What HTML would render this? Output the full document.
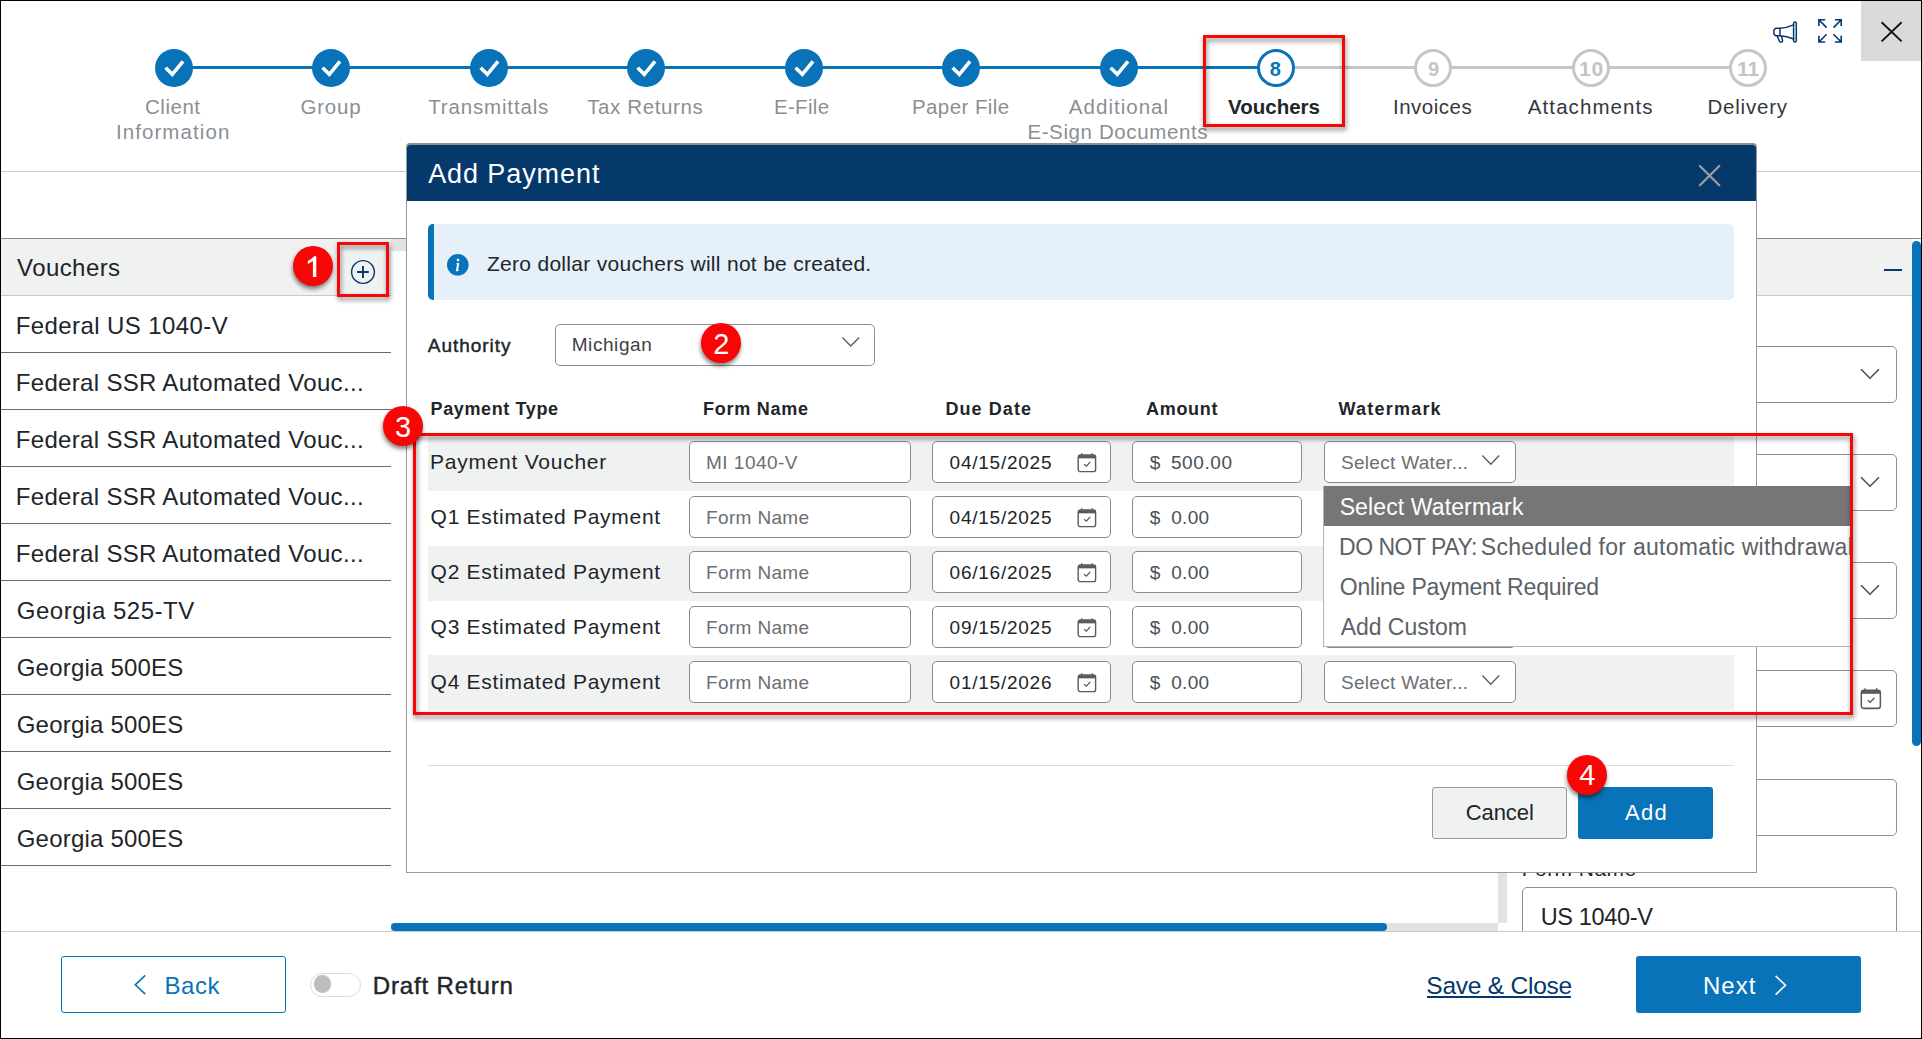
<!DOCTYPE html>
<html><head><meta charset="utf-8"><title>Add Payment</title>
<style>
html,body{margin:0;padding:0;}
body{width:1922px;height:1039px;overflow:hidden;background:#fff;position:relative;font-family:"Liberation Sans", sans-serif;}
#root{position:absolute;left:0;top:0;width:1922px;height:1039px;overflow:hidden;}
#root div,#root svg,#root span{position:absolute;box-sizing:border-box;}
.t{white-space:pre;line-height:0;}
.t i{display:inline-block;position:static !important;width:0;height:40px;}
#frame{left:0;top:0;width:1922px;height:1039px;border:1px solid #000;pointer-events:none;}
</style></head><body><div id="root">
<div style="left:1px;top:171px;width:1920px;height:1px;background:#c9c9c9;"></div>
<div style="left:1861px;top:1px;width:60px;height:60px;background:#d9d9d9;"></div>
<svg style="left:1879px;top:19px" width="26" height="26" viewBox="0 0 26 26"><path d="M2.6 3.2 L22.6 22.4 M22.6 3.2 L2.6 22.4" stroke="#111" stroke-width="1.9" fill="none"/></svg>
<svg style="left:1770px;top:18px" width="30" height="28" viewBox="1770 18 30 28" fill="none" stroke="#05386b" stroke-width="1.5" stroke-linejoin="round" stroke-linecap="round"><rect x="1793.6" y="22" width="2.7" height="20.1" rx="1.35"/><path d="M1793.6 24.9 C1789 27 1784.3 28.1 1780 28.2 L1776.7 28.2 C1774.7 28.2 1773.8 29.7 1773.8 31.95 C1773.8 34.2 1774.7 35.7 1776.7 35.7 L1780 35.7 C1784.3 35.8 1789 36.9 1793.6 39"/><path d="M1780 28.2 L1780 35.7"/><path d="M1777.2 36 L1779.5 41.4 C1780 42.5 1782.8 42.3 1782.5 40.8 L1781.7 36.3"/></svg>
<svg style="left:1815px;top:16px" width="30" height="30" viewBox="1815 16 30 30" fill="none" stroke="#05386b" stroke-width="1.6"><path d="M1825.2 19.8 H1818.9 V26.1 M1818.9 19.8 L1826.6 27.6"/><path d="M1834.9 19.8 H1841.2 V26.1 M1841.2 19.8 L1833.5 27.6"/><path d="M1825.2 42 H1818.9 V35.7 M1818.9 42 L1826.6 34.2"/><path d="M1834.9 42 H1841.2 V35.7 M1841.2 42 L1833.5 34.2"/></svg>
<div style="left:173.6px;top:66px;width:1102.0px;height:3px;background:#0973ba;"></div>
<div style="left:1275.6px;top:66px;width:472.60000000000014px;height:3px;background:#c6c6c6;"></div>
<svg style="left:154.6px;top:49px" width="38" height="38" viewBox="-19 -19 38 38"><circle r="19" fill="#0973ba"/><path d="M-8.4 -0.2 L-1.7 6.3 L9 -6.6" stroke="#fff" stroke-width="3.6" fill="none"/></svg>
<svg style="left:311.9px;top:49px" width="38" height="38" viewBox="-19 -19 38 38"><circle r="19" fill="#0973ba"/><path d="M-8.4 -0.2 L-1.7 6.3 L9 -6.6" stroke="#fff" stroke-width="3.6" fill="none"/></svg>
<svg style="left:469.7px;top:49px" width="38" height="38" viewBox="-19 -19 38 38"><circle r="19" fill="#0973ba"/><path d="M-8.4 -0.2 L-1.7 6.3 L9 -6.6" stroke="#fff" stroke-width="3.6" fill="none"/></svg>
<svg style="left:626.7px;top:49px" width="38" height="38" viewBox="-19 -19 38 38"><circle r="19" fill="#0973ba"/><path d="M-8.4 -0.2 L-1.7 6.3 L9 -6.6" stroke="#fff" stroke-width="3.6" fill="none"/></svg>
<svg style="left:784.5px;top:49px" width="38" height="38" viewBox="-19 -19 38 38"><circle r="19" fill="#0973ba"/><path d="M-8.4 -0.2 L-1.7 6.3 L9 -6.6" stroke="#fff" stroke-width="3.6" fill="none"/></svg>
<svg style="left:941.7px;top:49px" width="38" height="38" viewBox="-19 -19 38 38"><circle r="19" fill="#0973ba"/><path d="M-8.4 -0.2 L-1.7 6.3 L9 -6.6" stroke="#fff" stroke-width="3.6" fill="none"/></svg>
<svg style="left:1099.6px;top:49px" width="38" height="38" viewBox="-19 -19 38 38"><circle r="19" fill="#0973ba"/><path d="M-8.4 -0.2 L-1.7 6.3 L9 -6.6" stroke="#fff" stroke-width="3.6" fill="none"/></svg>
<svg style="left:1256.6px;top:49px" width="38" height="38" viewBox="-19 -19 38 38"><circle r="17.5" fill="#fff" stroke="#0973ba" stroke-width="3"/></svg>
<svg style="left:1414.4px;top:49px" width="38" height="38" viewBox="-19 -19 38 38"><circle r="17.5" fill="#fff" stroke="#c6c6c6" stroke-width="3"/></svg>
<svg style="left:1571.6px;top:49px" width="38" height="38" viewBox="-19 -19 38 38"><circle r="17.5" fill="#fff" stroke="#c6c6c6" stroke-width="3"/></svg>
<svg style="left:1729.2px;top:49px" width="38" height="38" viewBox="-19 -19 38 38"><circle r="17.5" fill="#fff" stroke="#c6c6c6" stroke-width="3"/></svg>
<div class="t" style="left:1269.83px;top:35.50px;font-size:20px;color:#0973ba;font-weight:700;"><i></i>8</div>
<div class="t" style="left:1427.90px;top:35.50px;font-size:20px;color:#c4c4c4;font-weight:700;"><i></i>9</div>
<div class="t" style="left:1579.04px;top:35.50px;font-size:21px;color:#c4c4c4;font-weight:700;letter-spacing:0.735px;"><i></i>10</div>
<div class="t" style="left:1737.09px;top:35.50px;font-size:21px;color:#c4c4c4;font-weight:700;letter-spacing:-0.030px;"><i></i>11</div>
<div class="t" style="left:145.00px;top:73.70px;font-size:20.5px;color:#8b8f93;letter-spacing:0.518px;"><i></i>Client</div>
<div class="t" style="left:115.97px;top:98.70px;font-size:20.5px;color:#8b8f93;letter-spacing:1.076px;"><i></i>Information</div>
<div class="t" style="left:300.45px;top:73.70px;font-size:20.5px;color:#8b8f93;letter-spacing:0.815px;"><i></i>Group</div>
<div class="t" style="left:428.14px;top:73.70px;font-size:20.5px;color:#8b8f93;letter-spacing:0.851px;"><i></i>Transmittals</div>
<div class="t" style="left:587.14px;top:73.70px;font-size:20.5px;color:#8b8f93;letter-spacing:0.636px;"><i></i>Tax Returns</div>
<div class="t" style="left:773.89px;top:73.70px;font-size:20.5px;color:#8b8f93;letter-spacing:0.331px;"><i></i>E-File</div>
<div class="t" style="left:911.89px;top:73.70px;font-size:20.5px;color:#8b8f93;letter-spacing:0.439px;"><i></i>Paper File</div>
<div class="t" style="left:1068.87px;top:73.70px;font-size:20.5px;color:#8b8f93;letter-spacing:1.022px;"><i></i>Additional</div>
<div class="t" style="left:1027.39px;top:98.70px;font-size:20.5px;color:#8b8f93;letter-spacing:0.612px;"><i></i>E-Sign Documents</div>
<div class="t" style="left:1228.09px;top:73.70px;font-size:20.5px;color:#212529;font-weight:700;"><i></i>Vouchers</div>
<div class="t" style="left:1392.96px;top:73.70px;font-size:20.5px;color:#34383c;letter-spacing:0.514px;"><i></i>Invoices</div>
<div class="t" style="left:1527.87px;top:73.70px;font-size:20.5px;color:#34383c;letter-spacing:1.070px;"><i></i>Attachments</div>
<div class="t" style="left:1707.39px;top:73.70px;font-size:20.5px;color:#34383c;letter-spacing:0.801px;"><i></i>Delivery</div>
<div style="left:1px;top:238px;width:406px;height:1px;background:#8c8c8c;"></div>
<div style="left:1px;top:239px;width:390px;height:56px;background:#f0f1f1;"></div>
<div style="left:1px;top:295px;width:390px;height:1px;background:#c8c8c8;"></div>
<div style="left:391px;top:239px;width:15px;height:12px;background:#e2e2e2;"></div>
<div class="t" style="left:17.10px;top:235.60px;font-size:24px;color:#212529;letter-spacing:0.413px;"><i></i>Vouchers</div>
<svg style="left:349px;top:258px" width="28" height="28" viewBox="349 258 28 28" fill="none" stroke="#05386b"><circle cx="363" cy="272" r="11.4" stroke-width="1.4"/><path d="M357.1 272 H368.8 M363 266.1 V277.9" stroke-width="1.9"/></svg>
<div class="t" style="left:15.80px;top:294.00px;font-size:24px;color:#212529;letter-spacing:0.406px;"><i></i>Federal US 1040-V</div>
<div style="left:1px;top:352px;width:390px;height:1px;background:#6b6b6b;"></div>
<div class="t" style="left:15.80px;top:351.00px;font-size:24px;color:#212529;letter-spacing:0.318px;"><i></i>Federal SSR Automated Vouc...</div>
<div style="left:1px;top:409px;width:390px;height:1px;background:#6b6b6b;"></div>
<div class="t" style="left:15.80px;top:408.00px;font-size:24px;color:#212529;letter-spacing:0.318px;"><i></i>Federal SSR Automated Vouc...</div>
<div style="left:1px;top:466px;width:390px;height:1px;background:#6b6b6b;"></div>
<div class="t" style="left:15.80px;top:465.00px;font-size:24px;color:#212529;letter-spacing:0.318px;"><i></i>Federal SSR Automated Vouc...</div>
<div style="left:1px;top:523px;width:390px;height:1px;background:#6b6b6b;"></div>
<div class="t" style="left:15.80px;top:522.00px;font-size:24px;color:#212529;letter-spacing:0.318px;"><i></i>Federal SSR Automated Vouc...</div>
<div style="left:1px;top:580px;width:390px;height:1px;background:#6b6b6b;"></div>
<div class="t" style="left:16.71px;top:579.00px;font-size:24px;color:#212529;letter-spacing:0.524px;"><i></i>Georgia 525-TV</div>
<div style="left:1px;top:637px;width:390px;height:1px;background:#6b6b6b;"></div>
<div class="t" style="left:16.71px;top:636.00px;font-size:24px;color:#212529;letter-spacing:0.208px;"><i></i>Georgia 500ES</div>
<div style="left:1px;top:694px;width:390px;height:1px;background:#6b6b6b;"></div>
<div class="t" style="left:16.71px;top:693.00px;font-size:24px;color:#212529;letter-spacing:0.208px;"><i></i>Georgia 500ES</div>
<div style="left:1px;top:751px;width:390px;height:1px;background:#6b6b6b;"></div>
<div class="t" style="left:16.71px;top:750.00px;font-size:24px;color:#212529;letter-spacing:0.208px;"><i></i>Georgia 500ES</div>
<div style="left:1px;top:808px;width:390px;height:1px;background:#6b6b6b;"></div>
<div class="t" style="left:16.71px;top:807.00px;font-size:24px;color:#212529;letter-spacing:0.208px;"><i></i>Georgia 500ES</div>
<div style="left:1px;top:865px;width:390px;height:1px;background:#6b6b6b;"></div>
<div style="left:1757px;top:238px;width:164px;height:1px;background:#8c8c8c;"></div>
<div style="left:1757px;top:239px;width:155px;height:56px;background:#f0f1f1;"></div>
<div style="left:1757px;top:295px;width:155px;height:1px;background:#c8c8c8;"></div>
<div style="left:1884px;top:269px;width:18px;height:2px;background:#05386b;"></div>
<div style="left:1912px;top:241px;width:9px;height:505px;background:#0973ba;border-radius:5px;"></div>
<div style="left:1700px;top:346px;width:197px;height:57px;border:1px solid #8d9196;border-radius:5px;background:#fff;"></div>
<svg style="left:1857.5px;top:365.2px" width="24" height="18" viewBox="0 0 24 18"><path d="M3 4.2 L12 13.2 L21 4.2" fill="none" stroke="#4a4f54" stroke-width="1.6"/></svg>
<div style="left:1700px;top:454px;width:197px;height:57px;border:1px solid #8d9196;border-radius:5px;background:#fff;"></div>
<svg style="left:1857.5px;top:473.2px" width="24" height="18" viewBox="0 0 24 18"><path d="M3 4.2 L12 13.2 L21 4.2" fill="none" stroke="#4a4f54" stroke-width="1.6"/></svg>
<div style="left:1700px;top:562px;width:197px;height:57px;border:1px solid #8d9196;border-radius:5px;background:#fff;"></div>
<svg style="left:1857.5px;top:581.2px" width="24" height="18" viewBox="0 0 24 18"><path d="M3 4.2 L12 13.2 L21 4.2" fill="none" stroke="#4a4f54" stroke-width="1.6"/></svg>
<div style="left:1700px;top:670px;width:197px;height:57px;border:1px solid #8d9196;border-radius:5px;background:#fff;"></div>
<svg style="left:1860.1px;top:688.38px" width="21.900000000000002" height="22.400000000000002" viewBox="-0.5 -1.2 20 20.2" fill="none" stroke="#555b61"><rect x="0.7" y="0.7" width="17.4" height="16.6" rx="2.2" stroke-width="1.4"/><path d="M0.7 2.4 H18.1" stroke-width="3.2"/><path d="M4.2 -1 V1 M14.7 -1 V1" stroke-width="1.3"/><path d="M6.6 9.9 L8.9 11.8 L12.7 7.5" stroke-width="1.3"/></svg>
<div style="left:1700px;top:779px;width:197px;height:57px;border:1px solid #8d9196;border-radius:5px;background:#fff;"></div>
<div class="t" style="left:1521.76px;top:836.00px;font-size:21px;color:#212529;letter-spacing:0.455px;"><i></i>Form Name</div>
<div style="left:1522px;top:887px;width:375px;height:57px;border:1px solid #8d9196;border-radius:5px;background:#fff;"></div>
<div class="t" style="left:1540.70px;top:885.00px;font-size:23.5px;color:#212529;letter-spacing:-0.335px;"><i></i>US 1040-V</div>
<div style="left:1498px;top:860px;width:9px;height:63px;background:#e2e2e2;"></div>
<div style="left:391px;top:923px;width:1107px;height:8px;background:#e2e2e2;"></div>
<div style="left:391px;top:923px;width:996px;height:8px;background:#0973ba;border-radius:4px;"></div>
<div style="left:1px;top:931px;width:1920px;height:107px;background:#fff;"></div>
<div style="left:1px;top:931px;width:1920px;height:1px;background:#c9c9c9;"></div>
<div style="left:61px;top:956px;width:225px;height:57px;border:1px solid #0973ba;border-radius:3px;background:#fff;"></div>
<svg style="left:130px;top:972px" width="20" height="26" viewBox="130 972 20 26"><path d="M145.2 975.4 L135.3 984.8 L145.2 994.2" fill="none" stroke="#0973ba" stroke-width="1.6"/></svg>
<div class="t" style="left:164.50px;top:954.30px;font-size:24px;color:#0973ba;letter-spacing:0.567px;"><i></i>Back</div>
<div style="left:310px;top:972.5px;width:51px;height:24px;border:1px solid #dcdcdc;border-radius:12px;background:#fff;"></div>
<div style="left:313.8px;top:975.3px;width:17.6px;height:17.6px;border-radius:50%;background:#bdbdbd;"></div>
<div class="t" style="left:372.70px;top:954.30px;font-size:24px;color:#212529;letter-spacing:0.869px;-webkit-text-stroke:0.45px #212529;"><i></i>Draft Return</div>
<div class="t" style="left:1426.36px;top:954.20px;font-size:24.5px;color:#05386b;letter-spacing:-0.238px;"><i></i>Save &amp; Close</div>
<div style="left:1427.4px;top:996.3px;width:144px;height:2px;background:#05386b;"></div>
<div style="left:1636px;top:956px;width:225px;height:57px;background:#0973ba;border-radius:3px;"></div>
<div class="t" style="left:1703.00px;top:954.30px;font-size:24px;color:#fff;letter-spacing:1.015px;"><i></i>Next</div>
<svg style="left:1770px;top:972px" width="22" height="26" viewBox="1770 972 22 26"><path d="M1775.6 975.9 L1785.5 985.3 L1775.6 994.7" fill="none" stroke="#fff" stroke-width="1.6"/></svg>
<div style="left:406px;top:143px;width:1351px;height:730px;background:#fff;border:1px solid #9a9a9a;border-top:2px solid #8e8e8e;border-radius:4px 4px 0 0;"></div>
<div style="left:407px;top:145px;width:1349px;height:56px;background:#05386b;border-radius:3px 3px 0 0;"></div>
<div class="t" style="left:428.17px;top:142.80px;font-size:27px;color:#fff;letter-spacing:0.913px;"><i></i>Add Payment</div>
<svg style="left:1696px;top:162px" width="28" height="28" viewBox="1696 162 28 28"><path d="M1699.9 166 L1719.3 185.2 M1719.3 166 L1699.9 185.2" stroke="#9c9c9c" stroke-width="2.3" stroke-linecap="round" fill="none"/></svg>
<div style="left:428px;top:224px;width:1306px;height:76px;background:#e6f0f8;border-left:6px solid #0973ba;border-radius:5px;"></div>
<svg style="left:446px;top:253px" width="24" height="24" viewBox="446 253 24 24"><circle cx="457.8" cy="264.8" r="10.8" fill="#0973ba"/></svg>
<svg style="left:450px;top:256px" width="16" height="18" viewBox="450 256 16 18" fill="none" stroke="#fff"><circle cx="458" cy="260.05" r="1.35" fill="#fff" stroke="none"/><path d="M458.25 263.4 L456.95 270.6" stroke-width="2"/><path d="M456.2 263.9 L458.9 263.35 M455.9 270.85 L458.8 270.45" stroke-width="0.9"/></svg>
<div class="t" style="left:486.90px;top:231.00px;font-size:21px;color:#212529;letter-spacing:0.299px;"><i></i>Zero dollar vouchers will not be created.</div>
<div class="t" style="left:427.87px;top:312.00px;font-size:19px;color:#212529;letter-spacing:0.954px;-webkit-text-stroke:0.45px #212529;"><i></i>Authority</div>
<div style="left:555px;top:324px;width:320px;height:42px;border:1px solid #8d9196;border-radius:5px;background:#fff;"></div>
<div class="t" style="left:571.72px;top:311.30px;font-size:19px;color:#3d4246;letter-spacing:0.569px;"><i></i>Michigan</div>
<svg style="left:840.8px;top:336.3px" width="19.6" height="11.6" viewBox="-1 -1 19.6 11.6"><path d="M0.4 0.5 L8.8 9.0 L17.200000000000003 0.5" fill="none" stroke="#555b61" stroke-width="1.3"/></svg>
<div class="t" style="left:430.51px;top:375.00px;font-size:18px;color:#212529;font-weight:700;letter-spacing:0.629px;"><i></i>Payment Type</div>
<div class="t" style="left:702.91px;top:375.00px;font-size:18px;color:#212529;font-weight:700;letter-spacing:0.756px;"><i></i>Form Name</div>
<div class="t" style="left:945.41px;top:375.00px;font-size:18px;color:#212529;font-weight:700;letter-spacing:1.079px;"><i></i>Due Date</div>
<div class="t" style="left:1145.93px;top:375.00px;font-size:18px;color:#212529;font-weight:700;letter-spacing:0.728px;"><i></i>Amount</div>
<div class="t" style="left:1338.49px;top:375.00px;font-size:18px;color:#212529;font-weight:700;letter-spacing:1.222px;"><i></i>Watermark</div>
<div style="left:428px;top:436px;width:1306px;height:55px;background:#f0f1f1;"></div>
<div class="t" style="left:429.96px;top:429.00px;font-size:21px;color:#212529;letter-spacing:0.753px;"><i></i>Payment Voucher</div>
<div style="left:689px;top:441px;width:222px;height:42px;border:1px solid #868b90;border-radius:5px;background:#fff;"></div>
<div class="t" style="left:706.01px;top:429.30px;font-size:19px;color:#6a6f74;letter-spacing:0.485px;"><i></i>MI 1040-V</div>
<div style="left:932px;top:441px;width:179px;height:42px;border:1px solid #868b90;border-radius:5px;background:#fff;"></div>
<div class="t" style="left:949.62px;top:429.30px;font-size:19px;color:#212529;letter-spacing:0.750px;"><i></i>04/15/2025</div>
<svg style="left:1077px;top:453.0px" width="20.0" height="20.5" viewBox="-0.5 -1.2 20 20.2" fill="none" stroke="#555b61"><rect x="0.7" y="0.7" width="17.4" height="16.6" rx="2.2" stroke-width="1.4"/><path d="M0.7 2.4 H18.1" stroke-width="3.2"/><path d="M4.2 -1 V1 M14.7 -1 V1" stroke-width="1.3"/><path d="M6.6 9.9 L8.9 11.8 L12.7 7.5" stroke-width="1.3"/></svg>
<div style="left:1132px;top:441px;width:170px;height:42px;border:1px solid #868b90;border-radius:5px;background:#fff;"></div>
<div class="t" style="left:1149.64px;top:429.30px;font-size:19px;color:#4a4f54;"><i></i>$</div>
<div class="t" style="left:1170.90px;top:429.30px;font-size:19px;color:#4a4f54;letter-spacing:0.595px;"><i></i>500.00</div>
<div style="left:1324px;top:441px;width:192px;height:42px;border:1px solid #868b90;border-radius:5px;background:#fff;"></div>
<div class="t" style="left:1340.99px;top:429.30px;font-size:19px;color:#6a6f74;letter-spacing:0.305px;"><i></i>Select Water...</div>
<svg style="left:1481.2px;top:454.4px" width="19.6" height="11.8" viewBox="-1 -1 19.6 11.8"><path d="M0.4 0.5 L8.8 9.200000000000001 L17.200000000000003 0.5" fill="none" stroke="#555b61" stroke-width="1.3"/></svg>
<div class="t" style="left:430.60px;top:484.00px;font-size:21px;color:#212529;letter-spacing:0.719px;"><i></i>Q1 Estimated Payment</div>
<div style="left:689px;top:496px;width:222px;height:42px;border:1px solid #868b90;border-radius:5px;background:#fff;"></div>
<div class="t" style="left:706.01px;top:484.30px;font-size:19px;color:#6a6f74;letter-spacing:0.354px;"><i></i>Form Name</div>
<div style="left:932px;top:496px;width:179px;height:42px;border:1px solid #868b90;border-radius:5px;background:#fff;"></div>
<div class="t" style="left:949.62px;top:484.30px;font-size:19px;color:#212529;letter-spacing:0.750px;"><i></i>04/15/2025</div>
<svg style="left:1077px;top:508.0px" width="20.0" height="20.5" viewBox="-0.5 -1.2 20 20.2" fill="none" stroke="#555b61"><rect x="0.7" y="0.7" width="17.4" height="16.6" rx="2.2" stroke-width="1.4"/><path d="M0.7 2.4 H18.1" stroke-width="3.2"/><path d="M4.2 -1 V1 M14.7 -1 V1" stroke-width="1.3"/><path d="M6.6 9.9 L8.9 11.8 L12.7 7.5" stroke-width="1.3"/></svg>
<div style="left:1132px;top:496px;width:170px;height:42px;border:1px solid #868b90;border-radius:5px;background:#fff;"></div>
<div class="t" style="left:1149.64px;top:484.30px;font-size:19px;color:#4a4f54;"><i></i>$</div>
<div class="t" style="left:1171.23px;top:484.30px;font-size:19px;color:#4a4f54;letter-spacing:0.283px;"><i></i>0.00</div>
<div style="left:1324px;top:496px;width:192px;height:42px;border:1px solid #868b90;border-radius:5px;background:#fff;"></div>
<div class="t" style="left:1340.99px;top:484.30px;font-size:19px;color:#6a6f74;letter-spacing:0.305px;"><i></i>Select Water...</div>
<svg style="left:1481.2px;top:509.4px" width="19.6" height="11.8" viewBox="-1 -1 19.6 11.8"><path d="M0.4 0.5 L8.8 9.200000000000001 L17.200000000000003 0.5" fill="none" stroke="#555b61" stroke-width="1.3"/></svg>
<div style="left:428px;top:546px;width:1306px;height:55px;background:#f0f1f1;"></div>
<div class="t" style="left:430.60px;top:539.00px;font-size:21px;color:#212529;letter-spacing:0.719px;"><i></i>Q2 Estimated Payment</div>
<div style="left:689px;top:551px;width:222px;height:42px;border:1px solid #868b90;border-radius:5px;background:#fff;"></div>
<div class="t" style="left:706.01px;top:539.30px;font-size:19px;color:#6a6f74;letter-spacing:0.354px;"><i></i>Form Name</div>
<div style="left:932px;top:551px;width:179px;height:42px;border:1px solid #868b90;border-radius:5px;background:#fff;"></div>
<div class="t" style="left:949.62px;top:539.30px;font-size:19px;color:#212529;letter-spacing:0.750px;"><i></i>06/16/2025</div>
<svg style="left:1077px;top:563.0px" width="20.0" height="20.5" viewBox="-0.5 -1.2 20 20.2" fill="none" stroke="#555b61"><rect x="0.7" y="0.7" width="17.4" height="16.6" rx="2.2" stroke-width="1.4"/><path d="M0.7 2.4 H18.1" stroke-width="3.2"/><path d="M4.2 -1 V1 M14.7 -1 V1" stroke-width="1.3"/><path d="M6.6 9.9 L8.9 11.8 L12.7 7.5" stroke-width="1.3"/></svg>
<div style="left:1132px;top:551px;width:170px;height:42px;border:1px solid #868b90;border-radius:5px;background:#fff;"></div>
<div class="t" style="left:1149.64px;top:539.30px;font-size:19px;color:#4a4f54;"><i></i>$</div>
<div class="t" style="left:1171.23px;top:539.30px;font-size:19px;color:#4a4f54;letter-spacing:0.283px;"><i></i>0.00</div>
<div style="left:1324px;top:551px;width:192px;height:42px;border:1px solid #868b90;border-radius:5px;background:#fff;"></div>
<div class="t" style="left:1340.99px;top:539.30px;font-size:19px;color:#6a6f74;letter-spacing:0.305px;"><i></i>Select Water...</div>
<svg style="left:1481.2px;top:564.4px" width="19.6" height="11.8" viewBox="-1 -1 19.6 11.8"><path d="M0.4 0.5 L8.8 9.200000000000001 L17.200000000000003 0.5" fill="none" stroke="#555b61" stroke-width="1.3"/></svg>
<div class="t" style="left:430.60px;top:594.00px;font-size:21px;color:#212529;letter-spacing:0.719px;"><i></i>Q3 Estimated Payment</div>
<div style="left:689px;top:606px;width:222px;height:42px;border:1px solid #868b90;border-radius:5px;background:#fff;"></div>
<div class="t" style="left:706.01px;top:594.30px;font-size:19px;color:#6a6f74;letter-spacing:0.354px;"><i></i>Form Name</div>
<div style="left:932px;top:606px;width:179px;height:42px;border:1px solid #868b90;border-radius:5px;background:#fff;"></div>
<div class="t" style="left:949.62px;top:594.30px;font-size:19px;color:#212529;letter-spacing:0.750px;"><i></i>09/15/2025</div>
<svg style="left:1077px;top:618.0px" width="20.0" height="20.5" viewBox="-0.5 -1.2 20 20.2" fill="none" stroke="#555b61"><rect x="0.7" y="0.7" width="17.4" height="16.6" rx="2.2" stroke-width="1.4"/><path d="M0.7 2.4 H18.1" stroke-width="3.2"/><path d="M4.2 -1 V1 M14.7 -1 V1" stroke-width="1.3"/><path d="M6.6 9.9 L8.9 11.8 L12.7 7.5" stroke-width="1.3"/></svg>
<div style="left:1132px;top:606px;width:170px;height:42px;border:1px solid #868b90;border-radius:5px;background:#fff;"></div>
<div class="t" style="left:1149.64px;top:594.30px;font-size:19px;color:#4a4f54;"><i></i>$</div>
<div class="t" style="left:1171.23px;top:594.30px;font-size:19px;color:#4a4f54;letter-spacing:0.283px;"><i></i>0.00</div>
<div style="left:1324px;top:606px;width:192px;height:42px;border:1px solid #868b90;border-radius:5px;background:#fff;"></div>
<div class="t" style="left:1340.99px;top:594.30px;font-size:19px;color:#6a6f74;letter-spacing:0.305px;"><i></i>Select Water...</div>
<svg style="left:1481.2px;top:619.4px" width="19.6" height="11.8" viewBox="-1 -1 19.6 11.8"><path d="M0.4 0.5 L8.8 9.200000000000001 L17.200000000000003 0.5" fill="none" stroke="#555b61" stroke-width="1.3"/></svg>
<div style="left:428px;top:655px;width:1306px;height:55px;background:#f0f1f1;"></div>
<div class="t" style="left:430.60px;top:649.00px;font-size:21px;color:#212529;letter-spacing:0.719px;"><i></i>Q4 Estimated Payment</div>
<div style="left:689px;top:661px;width:222px;height:42px;border:1px solid #868b90;border-radius:5px;background:#fff;"></div>
<div class="t" style="left:706.01px;top:649.30px;font-size:19px;color:#6a6f74;letter-spacing:0.354px;"><i></i>Form Name</div>
<div style="left:932px;top:661px;width:179px;height:42px;border:1px solid #868b90;border-radius:5px;background:#fff;"></div>
<div class="t" style="left:949.62px;top:649.30px;font-size:19px;color:#212529;letter-spacing:0.752px;"><i></i>01/15/2026</div>
<svg style="left:1077px;top:673.0px" width="20.0" height="20.5" viewBox="-0.5 -1.2 20 20.2" fill="none" stroke="#555b61"><rect x="0.7" y="0.7" width="17.4" height="16.6" rx="2.2" stroke-width="1.4"/><path d="M0.7 2.4 H18.1" stroke-width="3.2"/><path d="M4.2 -1 V1 M14.7 -1 V1" stroke-width="1.3"/><path d="M6.6 9.9 L8.9 11.8 L12.7 7.5" stroke-width="1.3"/></svg>
<div style="left:1132px;top:661px;width:170px;height:42px;border:1px solid #868b90;border-radius:5px;background:#fff;"></div>
<div class="t" style="left:1149.64px;top:649.30px;font-size:19px;color:#4a4f54;"><i></i>$</div>
<div class="t" style="left:1171.23px;top:649.30px;font-size:19px;color:#4a4f54;letter-spacing:0.283px;"><i></i>0.00</div>
<div style="left:1324px;top:661px;width:192px;height:42px;border:1px solid #868b90;border-radius:5px;background:#fff;"></div>
<div class="t" style="left:1340.99px;top:649.30px;font-size:19px;color:#6a6f74;letter-spacing:0.305px;"><i></i>Select Water...</div>
<svg style="left:1481.2px;top:674.4px" width="19.6" height="11.8" viewBox="-1 -1 19.6 11.8"><path d="M0.4 0.5 L8.8 9.200000000000001 L17.200000000000003 0.5" fill="none" stroke="#555b61" stroke-width="1.3"/></svg>
<div style="left:428px;top:765px;width:1306px;height:1px;background:#dcdcdc;"></div>
<div style="left:1432px;top:787px;width:135px;height:52px;background:#f0f1f1;border:1px solid #9a9a9a;border-radius:3px;"></div>
<div class="t" style="left:1465.69px;top:780.40px;font-size:22px;color:#212529;letter-spacing:-0.059px;"><i></i>Cancel</div>
<div style="left:1578px;top:787px;width:135px;height:52px;background:#0973ba;border-radius:3px;"></div>
<div class="t" style="left:1625.07px;top:780.40px;font-size:22px;color:#fff;letter-spacing:1.215px;"><i></i>Add</div>
<div style="left:1323px;top:486px;width:527px;height:161px;background:#fff;border-left:1px solid #b5b5b5;border-bottom:1px solid #b5b5b5;overflow:hidden;"></div>
<div style="left:1324px;top:486px;width:526px;height:40px;background:#767676;"></div>
<div class="t" style="left:1339.63px;top:474.90px;font-size:23px;color:#fff;letter-spacing:0.123px;"><i></i>Select Watermark</div>
<div style="left:1324px;top:526px;width:526px;height:40px;overflow:hidden;">
<div class="t" style="left:15.02px;top:-11.00px;font-size:23px;color:#5c6166;letter-spacing:-0.476px;"><i></i>DO NOT PAY:</div>
<div class="t" style="left:156.83px;top:-11.00px;font-size:23px;color:#5c6166;letter-spacing:0.268px;"><i></i>Scheduled for automatic withdrawal</div>
</div>
<div class="t" style="left:1339.80px;top:555.30px;font-size:23px;color:#5c6166;letter-spacing:-0.182px;"><i></i>Online Payment Required</div>
<div class="t" style="left:1340.67px;top:595.10px;font-size:23px;color:#5c6166;letter-spacing:-0.024px;"><i></i>Add Custom</div>
<div style="left:1203px;top:35px;width:142px;height:92px;border:3px solid #f80606;filter:drop-shadow(1px 3px 2.5px rgba(0,0,0,0.5));"></div>
<div style="left:337px;top:242px;width:52px;height:55px;border:3px solid #f80606;filter:drop-shadow(1px 3px 2.5px rgba(0,0,0,0.5));"></div>
<div style="left:413px;top:433px;width:1440px;height:282px;border:3px solid #f80606;filter:drop-shadow(1px 3px 2.5px rgba(0,0,0,0.5));"></div>
<div style="left:292.9px;top:246.0px;width:40px;height:40px;border-radius:50%;background:#f80606;box-shadow:-0.5px 3px 4px rgba(0,0,0,0.5);"></div>
<svg style="left:302.9px;top:252px" width="20" height="28" viewBox="302.9 252 20 28"><path d="M316.2 276.9 H312.79999999999995 V260.8 C311.5 262.1 309.59999999999997 263.3 307.7 264 V260.9 C310.5 259.6 313.09999999999997 257.4 314.0 256.2 H316.2 Z" fill="#fff"/></svg>
<div style="left:701.2px;top:323.0px;width:40px;height:40px;border-radius:50%;background:#f80606;box-shadow:-0.5px 3px 4px rgba(0,0,0,0.5);"></div>
<div class="t" style="left:713.26px;top:313.60px;font-size:29px;color:#fff;"><i></i>2</div>
<div style="left:382.8px;top:406.0px;width:40px;height:40px;border-radius:50%;background:#f80606;box-shadow:-0.5px 3px 4px rgba(0,0,0,0.5);"></div>
<div class="t" style="left:394.88px;top:396.60px;font-size:29px;color:#fff;"><i></i>3</div>
<div style="left:1567.0px;top:754.5px;width:40px;height:40px;border-radius:50%;background:#f80606;box-shadow:-0.5px 3px 4px rgba(0,0,0,0.5);"></div>
<div class="t" style="left:1579.16px;top:745.10px;font-size:29px;color:#fff;"><i></i>4</div>
<div id="frame"></div>
</div></body></html>
